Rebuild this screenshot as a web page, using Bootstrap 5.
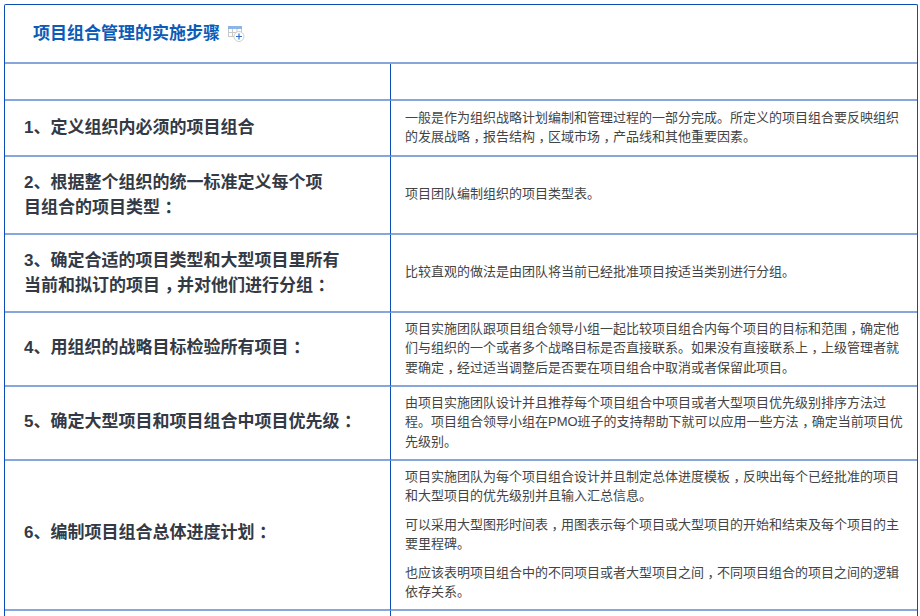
<!DOCTYPE html>
<html lang="zh-CN">
<head>
<meta charset="utf-8">
<title>项目组合管理的实施步骤</title>
<link href="https://cdn.jsdelivr.net/npm/bootstrap@5.3.0/dist/css/bootstrap.min.css" rel="stylesheet">
<style>
html, body { height: 616px; overflow: hidden; background: #fff; }
body { font-family: "Liberation Sans", "Noto Sans CJK SC", sans-serif; color: #333; }
.sheet { height: 700px; width: 914px; border: 1px solid #0b4db5; border-bottom: 0; border-radius: 2px 2px 0 0; }
.sheet-head { height: 59px; padding-left: 28px; border-bottom: 2px solid #88a6da; }
.sheet-title { font-size: 17px; line-height: 1; font-weight: 700; color: #0b5cb8; margin: 0; }
.steps { table-layout: fixed; width: 100%; border-collapse: separate; border-spacing: 0; margin: 0; }
.steps td { border-bottom: 2px solid #88a6da; padding: 0; vertical-align: middle; }
.steps .cell-l { width: 386px; padding-left: 19px; padding-right: 10px; border-right: 1px solid #0b4db5; font-size: 17px; line-height: 25px; font-weight: 700; color: #333a45; }
.steps .cell-r { padding-left: 14px; padding-right: 4px; padding-bottom: 2px; font-size: 13px; line-height: 19.5px; color: #444; white-space: nowrap; }
.steps p { margin: 0 0 10px; line-height: 19px; }
.steps p:last-child { margin: 0; }
.pc { display: inline-block; width: 1em; text-indent: .27em; letter-spacing: -.27em; }
.h-a { height: 37px; } .h-b { height: 56px; } .h-c { height: 78px; } .h-d { height: 74px; } .h-e { height: 150px; } .h-f { height: 60px; }
.steps .h-b .cell-l { padding-bottom: 2px; }
.steps .h-c .cell-l { padding-bottom: 1px; }
.steps .h-d .cell-l { padding-bottom: 4px; }
.steps .h-e .cell-l { padding-bottom: 6px; }
</style>
</head>
<body class="p-1">
<div class="sheet">
  <div class="sheet-head d-flex align-items-center gap-2">
    <h1 class="sheet-title">项目组合管理的实施步骤</h1>
    <svg width="17" height="16" viewBox="0 0 17 16" aria-hidden="true">
      <rect x="0.5" y="0.5" width="13" height="10" fill="#fff" stroke="#c8c8c8"/>
      <rect x="0" y="0" width="14" height="3" fill="#8db4e8"/>
      <path d="M0.5 6.5H13.5M4.5 3V11M9 3V11" stroke="#c8c8c8" fill="none"/>
      <circle cx="11" cy="10.5" r="5" fill="#fff" stroke="#cfcfcf"/>
      <path d="M8 10.5H14M11 7.5V13.5" stroke="#2f6fc4" stroke-width="1.2" fill="none"/>
    </svg>
  </div>
  <table class="steps">
    <tbody>
      <tr class="h-a"><td class="cell-l"></td><td class="cell-r"></td></tr>
      <tr class="h-b"><td class="cell-l">1、定义组织内必须的项目组合</td><td class="cell-r">一般是作为组织战略计划编制和管理过程的一部分完成。所定义的项目组合要反映组织<br>的发展战略<span class="pc">，</span>报告结构<span class="pc">，</span>区域市场<span class="pc">，</span>产品线和其他重要因素。</td></tr>
      <tr class="h-c"><td class="cell-l">2、根据整个组织的统一标准定义每个项<br>目组合的项目类型<span class="pc">：</span></td><td class="cell-r">项目团队编制组织的项目类型表。</td></tr>
      <tr class="h-c"><td class="cell-l">3、确定合适的项目类型和大型项目里所有<br>当前和拟订的项目<span class="pc">，</span>并对他们进行分组<span class="pc">：</span></td><td class="cell-r">比较直观的做法是由团队将当前已经批准项目按适当类别进行分组。</td></tr>
      <tr class="h-d"><td class="cell-l">4、用组织的战略目标检验所有项目<span class="pc">：</span></td><td class="cell-r">项目实施团队跟项目组合领导小组一起比较项目组合内每个项目的目标和范围<span class="pc">，</span>确定他<br>们与组织的一个或者多个战略目标是否直接联系。如果没有直接联系上<span class="pc">，</span>上级管理者就<br>要确定<span class="pc">，</span>经过适当调整后是否要在项目组合中取消或者保留此项目。</td></tr>
      <tr class="h-d"><td class="cell-l">5、确定大型项目和项目组合中项目优先级<span class="pc">：</span></td><td class="cell-r">由项目实施团队设计并且推荐每个项目组合中项目或者大型项目优先级别排序方法过<br>程。项目组合领导小组在PMO班子的支持帮助下就可以应用一些方法<span class="pc">，</span>确定当前项目优<br>先级别。</td></tr>
      <tr class="h-e"><td class="cell-l">6、编制项目组合总体进度计划<span class="pc">：</span></td><td class="cell-r"><p>项目实施团队为每个项目组合设计并且制定总体进度模板<span class="pc">，</span>反映出每个已经批准的项目<br>和大型项目的优先级别并且输入汇总信息。</p><p>可以采用大型图形时间表<span class="pc">，</span>用图表示每个项目或大型项目的开始和结束及每个项目的主<br>要里程碑。</p><p>也应该表明项目组合中的不同项目或者大型项目之间<span class="pc">，</span>不同项目组合的项目之间的逻辑<br>依存关系。</p></td></tr>
      <tr class="h-f"><td class="cell-l"></td><td class="cell-r"></td></tr>
    </tbody>
  </table>
</div>
<script src="https://cdn.jsdelivr.net/npm/bootstrap@5.3.0/dist/js/bootstrap.bundle.min.js"></script>
</body>
</html>
